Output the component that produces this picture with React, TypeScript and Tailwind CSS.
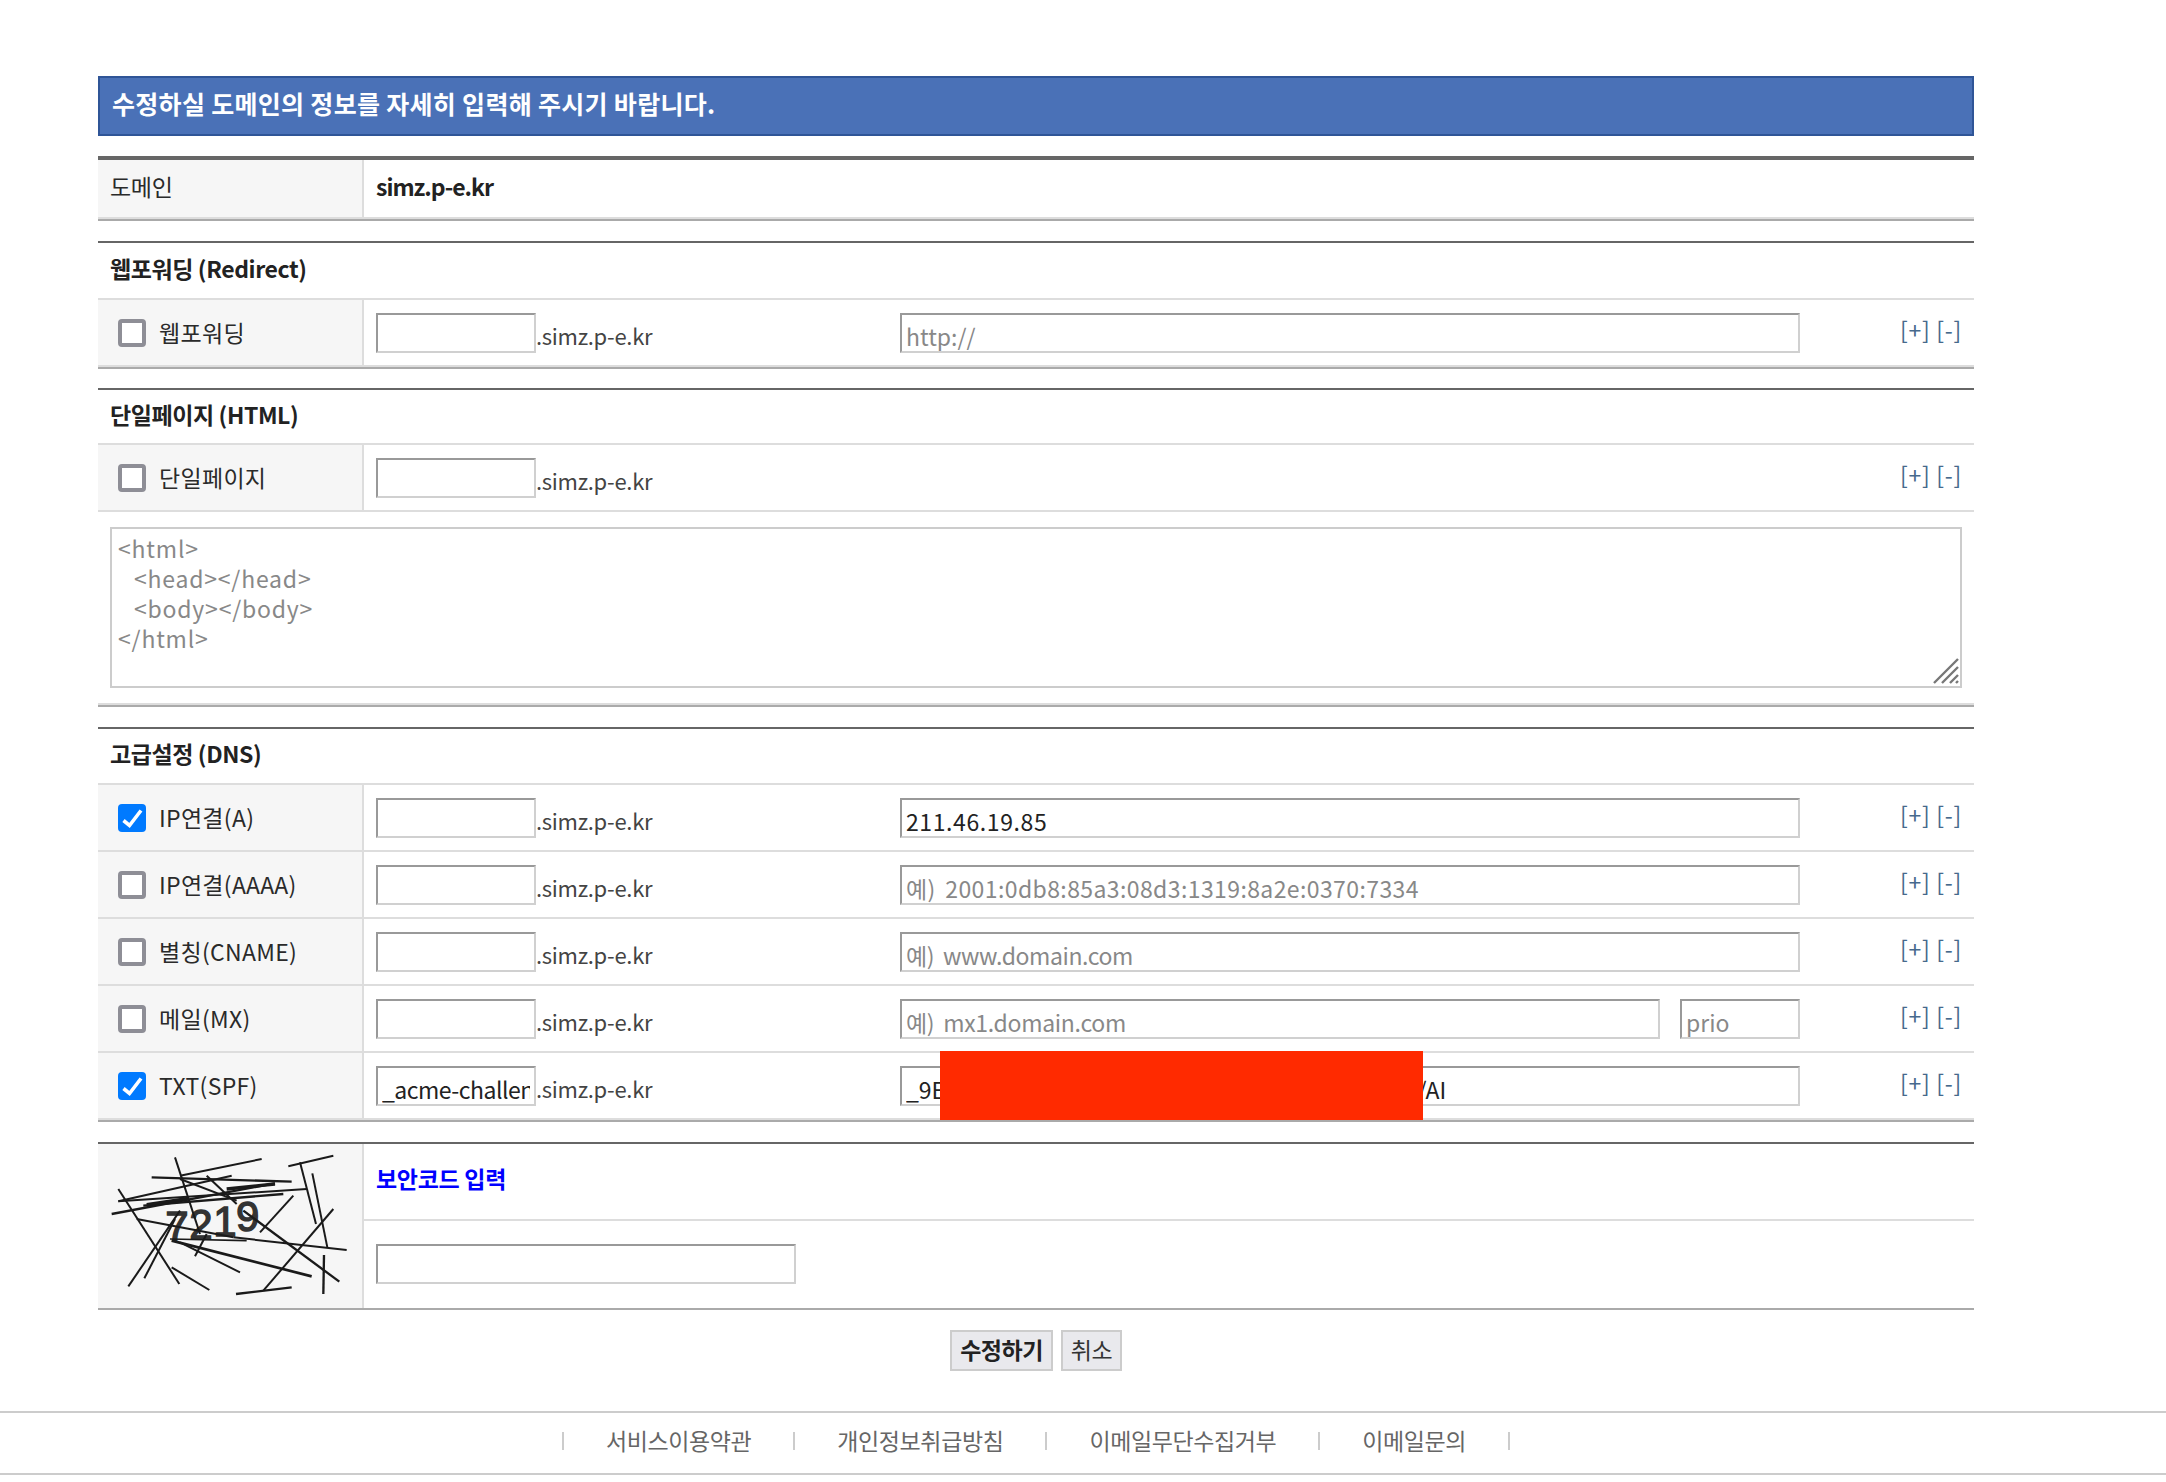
import type { ReactNode } from 'react';

const fontStack = { fontFamily: '"Noto Sans CJK KR", "Noto Sans", sans-serif' };

// 캡차 이미지의 선들 (x1, y1, x2, y2, 두께)
const captchaLines = [
  [225, 40, 300, 270, 6],
  [240, 95, 485, 45, 6],
  [155, 100, 575, 113, 7],
  [565, 67, 700, 35, 6],
  [600, 55, 648, 240, 6],
  [637, 88, 682, 310, 6],
  [55, 135, 238, 420, 6],
  [55, 172, 395, 95, 6],
  [35, 210, 525, 118, 7],
  [55, 172, 620, 135, 6],
  [130, 185, 550, 150, 7],
  [140, 182, 265, 163, 10],
  [380, 135, 525, 120, 10],
  [580, 155, 480, 265, 6],
  [700, 195, 490, 440, 6],
  [408, 450, 575, 430, 7],
  [672, 333, 670, 450, 7],
  [110, 225, 400, 280, 6],
  [400, 280, 740, 318, 6],
  [215, 290, 635, 397, 8],
  [430, 200, 718, 413, 7],
  [85, 427, 240, 200, 6],
  [133, 403, 225, 225, 6],
  [215, 370, 328, 438, 6],
  [240, 295, 420, 385, 6],
  [285, 337, 320, 270, 6],
  [240, 105, 410, 170, 6],
  [320, 95, 410, 180, 6],
  [210, 285, 440, 290, 5],
];

const inputClass =
  'h-[40px] border-2 border-t-[#999] border-l-[#999] border-r-[#d0d0d0] border-b-[#d0d0d0] bg-white px-[4px] pt-[6px] text-[23px] leading-[30px] text-[#222] outline-none placeholder:text-[#888]';

function Checkbox({ checked }: { checked?: boolean }) {
  if (checked) {
    return (
      <div className="h-[28px] w-[28px] rounded-[4px] bg-[#007aff]">
        <svg width="28" height="28" viewBox="0 0 28 28" fill="none">
          <path d="M5.5 16.5L11.5 21.5L23 6.5" stroke="white" strokeWidth="3.6" />
        </svg>
      </div>
    );
  }
  return <div className="h-[28px] w-[28px] rounded-[4px] border-[4px] border-[#8e8e96] bg-white" />;
}

function AddRemove() {
  return (
    <div className="mb-[7px] ml-auto pr-[12px] text-[23px] leading-none tracking-[0.7px] text-[#46698c]">
      [+] [-]
    </div>
  );
}

function Row({
  label,
  checked,
  value,
  hostValue,
  placeholder,
  prio,
  last,
  valueClass = '',
}: {
  label: string;
  checked?: boolean;
  value?: string;
  hostValue?: string;
  placeholder?: string;
  prio?: boolean;
  last?: boolean;
  valueClass?: string;
}) {
  return (
    <div className={`grid grid-cols-[266px_1fr] ${last ? 'h-[65px]' : 'h-[67px] border-b-2 border-[#ddd]'}`}>
      <div className="flex items-center gap-[13px] border-r-2 border-[#ddd] bg-[#f6f6f6] pl-[20px] text-[23px] tracking-[0.3px] text-[#2a2a2a]">
        <Checkbox checked={checked} />
        <span>{label}</span>
      </div>
      <div className="flex items-center pl-[12px]">
        <input readOnly defaultValue={hostValue} className={`${inputClass} w-[160px] tracking-[-0.5px]`} />
        <span className="mt-[6px] w-[364px] text-[22px] tracking-[-0.3px] text-[#444]">.simz.p-e.kr</span>
        {placeholder !== undefined || value !== undefined ? (
          <div className="flex w-[900px] justify-between">
            <input
              readOnly
              defaultValue={value}
              placeholder={placeholder}
              className={`${inputClass} ${valueClass} [word-spacing:4px] ${prio ? 'w-[760px]' : 'w-full'}`}
            />
            {prio && <input readOnly placeholder="prio" className={`${inputClass} w-[120px]`} />}
          </div>
        ) : null}
        <AddRemove />
      </div>
    </div>
  );
}

function SectionTitle({ children, height = 'h-[58px]' }: { children: ReactNode; height?: string }) {
  return (
    <div
      className={`flex ${height} items-center border-t-2 border-b-2 border-t-[#666] border-b-[#ddd] pb-[5px] pl-[12px] text-[23px] font-bold tracking-[-0.4px] text-[#222]`}
    >
      {children}
    </div>
  );
}

function SectionEnd() {
  return <div className="h-[4px] border-t-2 border-b-2 border-t-[#ddd] border-b-[#aaa]" />;
}

const footerLinks = ['서비스이용약관', '개인정보취급방침', '이메일무단수집거부', '이메일문의'];

export default function App() {
  return (
    <div className="min-h-[1482px] bg-white" style={fontStack}>
      <div className="ml-[98px] w-[1876px] pt-[76px]">
        <div className="flex h-[60px] items-center border-2 border-[#2f5597] bg-[#4a71b7] pb-[5px] pl-[12px] text-[25px] font-bold tracking-[0.3px] text-white">
          수정하실 도메인의 정보를 자세히 입력해 주시기 바랍니다.
        </div>

        <div className="mt-[20px] grid h-[61px] grid-cols-[266px_1fr] border-t-4 border-[#666]">
          <div className="flex items-center border-r-2 border-[#ddd] bg-[#f6f6f6] pb-[4px] pl-[12px] text-[23px] tracking-[-0.3px] text-[#2a2a2a]">
            도메인
          </div>
          <div className="flex items-center pb-[4px] pl-[12px] text-[23px] font-bold tracking-[-1px] text-[#222]">
            simz.p-e.kr
          </div>
        </div>
        <SectionEnd />

        <div className="mt-[20px]">
          <SectionTitle height="h-[59px]">웹포워딩 (Redirect)</SectionTitle>
          <Row label="웹포워딩" placeholder="http://" last />
          <SectionEnd />
        </div>

        <div className="mt-[19px]">
          <SectionTitle height="h-[57px]">단일페이지 (HTML)</SectionTitle>
          <Row label="단일페이지" />
          <div className="px-[12px] pt-[15px] pb-[15px]">
            <div className="relative">
              <textarea
                readOnly
                className="block h-[161px] w-full resize-none border-2 border-[#ccc] bg-white px-[6px] pt-[4px] text-[23px] leading-[30px] tracking-[0.8px] text-[#888] outline-none [word-spacing:2px]"
                defaultValue={'<html>\n  <head></head>\n  <body></body>\n</html>'}
              />
              <svg className="absolute right-[3px] bottom-[4px]" width="26" height="26" viewBox="0 0 26 26" stroke="#777" strokeWidth="2.4">
                <path d="M1 25L25 1M9 25L25 9M17 25L25 17M23 25L25 23" />
              </svg>
            </div>
          </div>
          <SectionEnd />
        </div>

        <div className="relative mt-[20px]">
          <SectionTitle>고급설정 (DNS)</SectionTitle>
          <Row label="IP연결(A)" checked value="211.46.19.85" valueClass="tracking-[0.6px]" />
          <Row
            label="IP연결(AAAA)"
            placeholder="예) 2001:0db8:85a3:08d3:1319:8a2e:0370:7334"
            valueClass="tracking-[0.4px]"
          />
          <Row label="별칭(CNAME)" placeholder="예) www.domain.com" valueClass="tracking-[-0.4px]" />
          <Row label="메일(MX)" placeholder="예) mx1.domain.com" valueClass="tracking-[-0.3px]" prio />
          <Row label="TXT(SPF)" checked hostValue="_acme-challenge" value={'_9E' + '0'.repeat(37) + '/AI'} last />
          <SectionEnd />
          {/* 가려진 TXT 값 */}
          <div className="absolute bottom-[2px] left-[842px] h-[69px] w-[483px] bg-[#ff2a00]" />
        </div>

        <div className="mt-[20px] grid h-[168px] grid-cols-[266px_1fr] border-t-2 border-b-2 border-t-[#666] border-b-[#aaa]">
          <div className="border-r-2 border-[#ddd] bg-[#f6f6f6] pl-[2px]">
            <svg width="262" height="163" viewBox="0 0 786 489">
              <text
                x="196 268 340 408"
                y="290 285 275 262"
                fontSize="126"
                fill="#333"
                stroke="#333"
                strokeWidth="4"
                fontFamily="Liberation Sans, sans-serif"
              >
                7219
              </text>
              {captchaLines.map(([x1, y1, x2, y2, w], i) => (
                <line key={i} x1={x1} y1={y1} x2={x2} y2={y2} stroke="#1a1a1a" strokeWidth={w} />
              ))}
            </svg>
          </div>
          <div className="flex flex-col">
            <div className="flex h-[77px] items-center border-b-2 border-[#ddd] pb-[6px] pl-[12px] text-[23px] font-bold tracking-[-0.3px] text-[#0000ff]">
              보안코드 입력
            </div>
            <div className="flex flex-1 items-center pb-[2px] pl-[12px]">
              <input readOnly className={`${inputClass} w-[420px]`} />
            </div>
          </div>
        </div>

        <div className="mt-[20px] flex justify-center gap-[8px]">
          <button className="h-[41px] w-[103px] border-2 border-[#ccc] bg-[#e9e9ed] pb-[2px] text-[23px] leading-none font-bold tracking-[-0.5px] text-[#222]">
            수정하기
          </button>
          <button className="h-[41px] w-[61px] border-2 border-[#ccc] bg-[#e9e9ed] pb-[2px] text-[23px] leading-none tracking-[-0.3px] text-[#333]">
            취소
          </button>
        </div>
      </div>

      <div className="mt-[40px] flex h-[64px] items-center border-y-2 border-[#ccc] pb-[5px] pl-[562px] text-[23px] tracking-[-0.4px] text-[#666]">
        {footerLinks.map((link) => (
          <span key={link} className="flex items-center">
            <span className="h-[18px] w-[2px] bg-[#ccc]" />
            <span className="px-[42px]">{link}</span>
          </span>
        ))}
        <span className="h-[18px] w-[2px] bg-[#ccc]" />
      </div>
    </div>
  );
}
